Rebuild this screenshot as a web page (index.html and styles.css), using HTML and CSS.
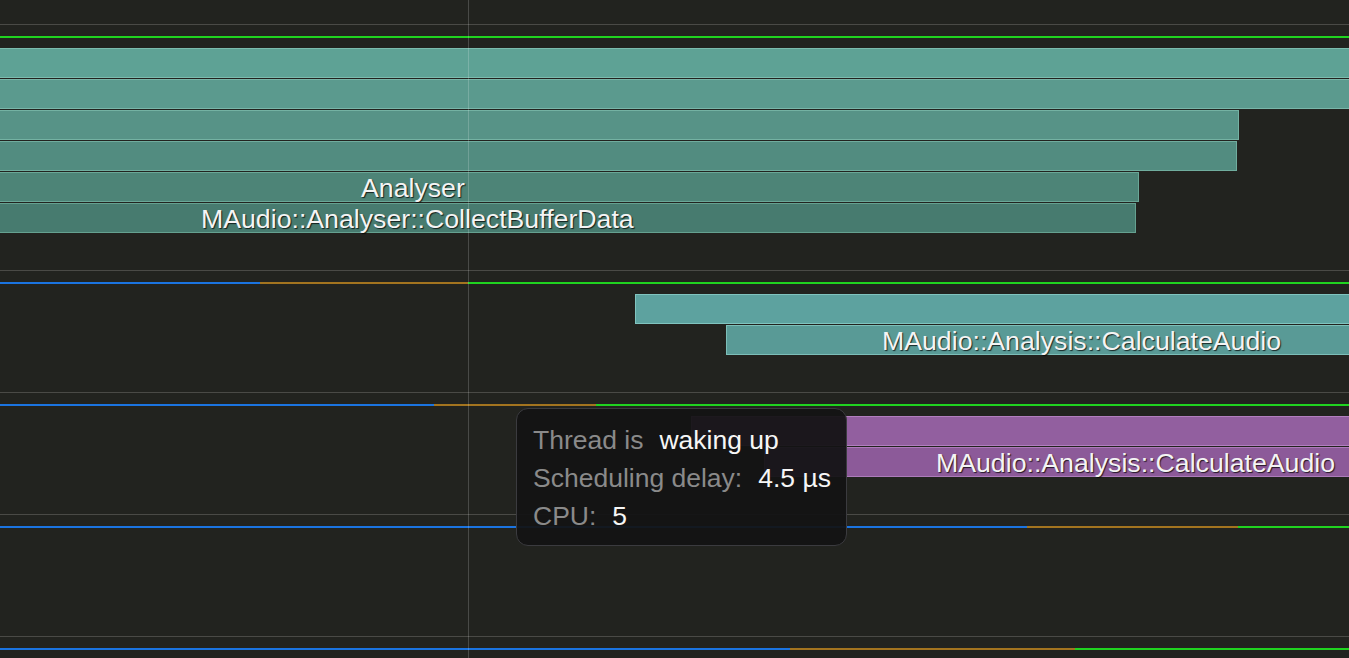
FILE: index.html
```html
<!DOCTYPE html>
<html lang="en">
<head>
<meta charset="utf-8">
<title>Timeline</title>
<link rel="stylesheet" href="styles.css">
</head>
<body>
<div class="timeline">
  <div class="topgap"></div>

  <section class="lane lane-tall">
    <div class="state">
      <span class="seg run" style="width:1349px"></span>
    </div>
    <div class="bars">
      <div class="bar g1" style="margin-left:-2px;width:1360px"></div>
      <div class="bar g2" style="margin-left:-2px;width:1360px"></div>
      <div class="bar g3" style="margin-left:-2px;width:1241px"></div>
      <div class="bar g4" style="margin-left:-2px;width:1239px"></div>
      <div class="bar g5" style="margin-left:-2px;width:1141px"><span class="label" style="margin-left:362px">Analyser</span></div>
      <div class="bar g6" style="margin-left:-2px;width:1138px"><span class="label" style="margin-left:202px">MAudio::Analyser::CollectBufferData</span></div>
    </div>
  </section>

  <section class="lane">
    <div class="state">
      <span class="seg idle" style="width:260px"></span>
      <span class="seg wait" style="width:208px"></span>
      <span class="seg run" style="width:881px"></span>
    </div>
    <div class="bars">
      <div class="bar c1" style="margin-left:635px;width:720px"></div>
      <div class="bar c2" style="margin-left:726px;width:640px"><span class="label" style="margin-left:155px">MAudio::Analysis::CalculateAudio</span></div>
    </div>
  </section>

  <section class="lane">
    <div class="state">
      <span class="seg idle" style="width:434px"></span>
      <span class="seg wait" style="width:162px"></span>
      <span class="seg run" style="width:753px"></span>
    </div>
    <div class="bars">
      <div class="bar p1" style="margin-left:691px;width:680px"></div>
      <div class="bar p2" style="margin-left:764px;width:600px"><span class="label" style="margin-left:171px">MAudio::Analysis::CalculateAudio</span></div>
    </div>
  </section>

  <section class="lane">
    <div class="state">
      <span class="seg idle" style="width:1027px"></span>
      <span class="seg wait" style="width:211px"></span>
      <span class="seg run" style="width:111px"></span>
    </div>
  </section>

  <section class="lane">
    <div class="state">
      <span class="seg idle" style="width:790px"></span>
      <span class="seg wait" style="width:285px"></span>
      <span class="seg run" style="width:274px"></span>
    </div>
  </section>

  <div class="cursor"></div>

  <div class="tooltip">
    <div class="tip-row"><span class="key">Thread is</span><span class="val">waking up</span></div>
    <div class="tip-row"><span class="key">Scheduling delay:</span><span class="val">4.5 µs</span></div>
    <div class="tip-row"><span class="key">CPU:</span><span class="val">5</span></div>
  </div>
</div>
</body>
</html>
```

FILE: styles.css
```css
html, body {
  margin: 0;
  padding: 0;
  background: #22231f;
  overflow: hidden;
}

body {
  font-family: "Liberation Sans", Arial, sans-serif;
}

.timeline {
  position: relative;
  width: 1349px;
  height: 658px;
  overflow: hidden;
}

.topgap {
  height: 24px;
}

.lane {
  box-sizing: border-box;
  height: 122px;
  border-top: 1px solid #4a4a46;
  padding-top: 11px;
  overflow: hidden;
}

.lane-tall {
  height: 246px;
}

.state {
  display: flex;
  height: 2px;
}

.seg {
  display: block;
  height: 2px;
  flex: none;
}

.seg.run { background: #20d320; }
.seg.idle { background: #1b74e0; }
.seg.wait { background: #a3741f; }

.bars {
  display: flex;
  flex-direction: column;
  gap: 1px;
  margin-top: 10px;
}

.bar {
  box-sizing: border-box;
  height: 30px;
  flex: none;
  border: 1px solid;
  display: flex;
  align-items: center;
  white-space: nowrap;
}

.g1 { background: #5ea295; border-color: #7cbcae; }
.g2 { background: #5b9a8e; border-color: #79b6a9; }
.g3 { background: #579387; border-color: #74b2a3; }
.g4 { background: #528c80; border-color: #70ad9e; }
.g5 { background: #4d8477; border-color: #6aa797; }
.g6 { background: #477b6f; border-color: #65a190; }

.c1 { background: #5da29f; border-color: #80c4bf; }
.c2 { background: #599a96; border-color: #7cbeb8; }

.p1 { background: #925f9f; border-color: #b27fbf; }
.p2 { background: #8c5a99; border-color: #ad7bbb; }

.label {
  font-size: 26.7px;
  line-height: 28px;
  padding-top: 2px;
  color: #f4f4f4;
  text-shadow: 1px 1px 1px rgba(0, 0, 0, 0.75);
}

.cursor {
  position: absolute;
  left: 468px;
  top: 0;
  width: 1px;
  height: 658px;
  background: rgba(255, 255, 255, 0.18);
}

.tooltip {
  position: absolute;
  left: 516px;
  top: 408px;
  box-sizing: border-box;
  width: 331px;
  height: 138px;
  padding: 12px 16px;
  background: rgba(19, 19, 20, 0.94);
  border: 1px solid #3b3b3f;
  border-radius: 12px;
  font-size: 26.5px;
  line-height: 38px;
  white-space: nowrap;
}

.tip-row {
  display: flex;
  gap: 16px;
}

.key { color: #8a8a8a; }
.val { color: #f6f6f6; }
```
